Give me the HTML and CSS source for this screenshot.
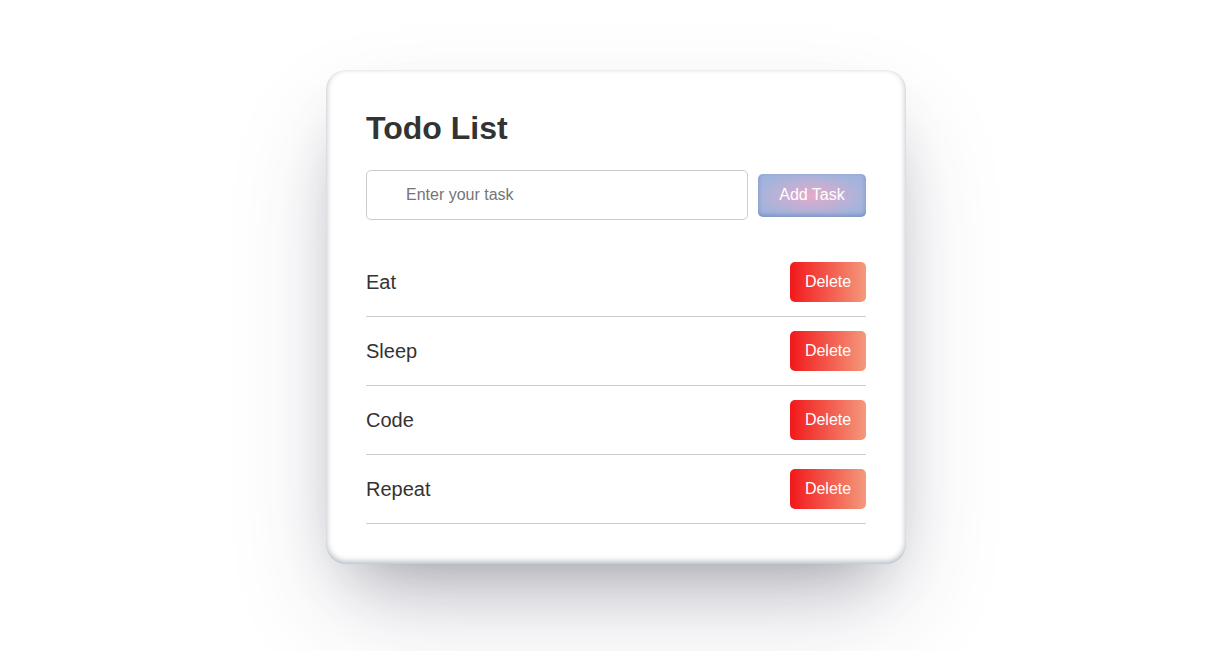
FILE: index.html
```html
<!DOCTYPE html>
<html lang="en">
<head>
  <meta charset="UTF-8" />
  <meta name="viewport" content="width=device-width, initial-scale=1.0" />
  <title>Todo List</title>
  <link rel="stylesheet" href="styles.css">
</head>
<body>
  <div class="todo-card">
    <h1>Todo List</h1>

    <form class="todo-form">
      <input type="text" placeholder="Enter your task" />
      <button type="submit" class="add-btn">Add Task</button>
    </form>

    <ul class="todo-list">
      <li class="todo-item">
        <span>Eat</span>
        <button class="delete-btn">Delete</button>
      </li>
      <li class="todo-item">
        <span>Sleep</span>
        <button class="delete-btn">Delete</button>
      </li>
      <li class="todo-item">
        <span>Code</span>
        <button class="delete-btn">Delete</button>
      </li>
      <li class="todo-item">
        <span>Repeat</span>
        <button class="delete-btn">Delete</button>
      </li>
    </ul>
  </div>
</body>
</html>
```

FILE: styles.css
```css
html {
  height: 100%;
}
body {
  min-height: 100%;
  box-sizing: border-box;
  background-color: #fff;
  font-family: "Liberation Sans", Arial, sans-serif;
  color: #333;
  margin: 0;
  padding: 70px 0 0;
}
.todo-card {
  width: 500px;
  margin: 0 auto;
  padding: 40px;
  background-color: #fff;
  border-radius: 20px;
  box-shadow: rgba(50, 50, 93, 0.25) 0 50px 100px -20px,
              rgba(0, 0, 0, 0.3) 0 30px 60px -30px,
              rgba(10, 37, 64, 0.35) 0 -2px 6px 0 inset;
}
.todo-card h1 {
  margin: 0 0 23px;
  font-size: 32px;
  color: #333;
}
.todo-form {
  display: flex;
  align-items: center;
  gap: 10px;
}
.todo-form input {
  flex: 1;
  min-width: 0;
  padding: 15px 39px;
  font-family: inherit;
  font-size: 16px;
  color: #333;
  border: 1px solid #ccc;
  border-radius: 5px;
  outline: none;
}
.todo-form input::placeholder {
  color: #757575;
}
.add-btn {
  width: 108px;
  height: 43px;
  border: none;
  border-radius: 5px;
  font-family: inherit;
  font-size: 16px;
  color: #fff;
  background: radial-gradient(ellipse at center, #e6aac8 0%, #c9aed2 30%, #a5b4dc 70%, #9cb0db 100%);
  box-shadow: inset 0 -2px 4px rgba(70, 95, 150, 0.4);
  cursor: pointer;
}
.todo-list {
  list-style: none;
  margin: 28px 0 0;
  padding: 0;
}
.todo-item {
  display: flex;
  align-items: center;
  justify-content: space-between;
  padding: 14px 0;
  border-bottom: 1px solid #ccc;
  font-size: 20px;
}
.delete-btn {
  width: 76px;
  height: 40px;
  border: none;
  border-radius: 5px;
  font-family: inherit;
  font-size: 16px;
  color: #fff;
  background: linear-gradient(to right, #f2181b, #f4997c);
  cursor: pointer;
}
```
